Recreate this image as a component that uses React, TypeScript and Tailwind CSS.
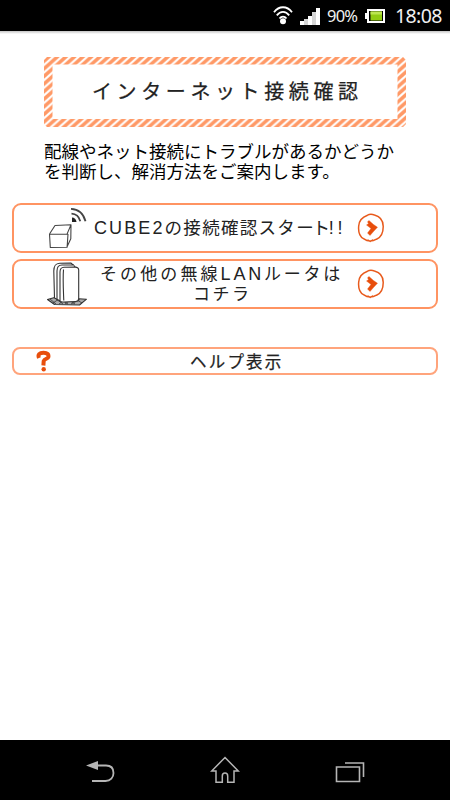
import React from "react";

function StatusBar() {
  return (
    <header className="h-[31px] bg-black text-[#f0f0f0] flex items-center justify-end font-['Noto_Sans','Open_Sans',sans-serif]">
      <svg width="20" height="19" viewBox="0 0 20 19" className="mr-[7px]" fill="none" stroke="#fff" strokeWidth="1.800">
        <path d="M1 6.200C6-.4 14-.4 19 6.200M3.800 9.400c3.600-4.600 8.800-4.600 12.400 0M6.500 12.500c2-2.600 5-2.600 7 0" />
        <circle cx="10" cy="15.300" r="3" fill="#fff" stroke="none" />
      </svg>
      <svg width="20" height="18" viewBox="0 0 20 18" className="mr-[7px]">
        <path d="M0 14h4v4H0zM8 9h4v9H8zM16 1h4v17h-4z" fill="#fff" />
        <path d="M4 12h4v6H4zM12 5h4v13h-4z" fill="#d5d5d5" />
      </svg>
      <span className="text-[16.500px] leading-[30px] tracking-[-0.800px] w-[31px] whitespace-nowrap mr-[7px]">90%</span>
      <svg width="20" height="14" viewBox="0 0 20 14" className="mr-[10px]">
        <path d="M0 4h2v6H0z" fill="#fff" />
        <rect x="3" y="1" width="16" height="12" fill="#000" stroke="#fff" strokeWidth="2" />
        <rect x="5.500" y="2.500" width="11.500" height="9" fill="#91cc12" />
        <path d="M5.500 2.500H17v3H5.500z" fill="#bce650" />
      </svg>
      <span className="text-[19.500px] leading-[31px] tracking-[-0.600px] w-[48px] whitespace-nowrap mr-[7px]">18:08</span>
    </header>
  );
}

function Banner() {
  return (
    <h1 className="relative ml-[44px] mt-[23px] w-[362px] h-[70px] flex items-center">
      <svg className="absolute inset-0" width="362" height="70" viewBox="0 0 362 70">
        <defs>
          <pattern id="stripe" width="8.5" height="7.6" patternUnits="userSpaceOnUse" patternTransform="translate(2 0)">
            <path d="M-8.500 7.600L0 0h5.300L-3.200 7.600zM0 7.600L8.500 0h5.300L5.300 7.600z" fill="#ff9966" />
          </pattern>
        </defs>
        <path fill="url(#stripe)" fillRule="evenodd" d="M3 0h356l3 3v64l-3 3H3l-3-3V3zM8.500 7.500V62h345V7.500z" />
      </svg>
      <span className="ml-[48px] text-[20px] tracking-[4.600px] whitespace-nowrap font-normal text-[#222] [-webkit-text-stroke:0.250px_#222]">インターネット接続確認</span>
    </h1>
  );
}

function CubeIcon() {
  return (
    <svg width="42" height="44" viewBox="0 0 42 44" fill="none" stroke="#444" strokeWidth="1.100" strokeLinejoin="round">
      <path d="M2.500 28l18.500.3-.9 13-16.800.2zM2.500 28l5.500-8.500 16-.7-4 9.300M24 18.800l-.2 14-4 8.500" />
      <path d="M25 16v-4.500c2.500 0 4 1.700 4.500 4.500z" fill="#222" stroke="none" />
      <path d="M24.500 7.700c4.700.2 7.500 2.800 8.800 7.500M24 2.800c8 .3 12.500 5 14.500 12.400" strokeWidth="1.800" />
    </svg>
  );
}

function RouterIcon() {
  return (
    <svg width="42" height="44" viewBox="0 0 42 44" fill="none" stroke="#333" strokeWidth="1.100" strokeLinejoin="round">
      <path d="M.5 37.500l8-2.300 31 2-7 5.800-25-.5z" fill="#aaa" />
      <path d="M3 37l6 5m0-5l7 5m-3-5l8 5m-1-5l8 5m2-4l5 3M6 41l6-4m0 5l7-5m-1 5l7-5m-1 5l9-4.500" strokeWidth=".8" />
      <path d="M7.500 36L6.800 9c0-6 2-7.500 6-7.800l11-.2 4 3.500v34l-15 .3z" fill="#fff" />
      <path d="M10 37V9c0-4 1.500-6 5-6h12M13 38.500V10c0-3 1-4.600 4-4.700l11-.2c2.500 0 3.700 1 3.700 3V36.500c0 2-1 3-3 3L17 40c-2 0-4-.3-4-1.500z" fill="#fff" />
      <path d="M16.500 7.500c-.8 10-.2 19 .3 31" />
    </svg>
  );
}

function ArrowIcon() {
  return (
    <svg width="28" height="31" viewBox="0 0 28 31" fill="none" stroke="#e85a1c">
      <path d="M10.500 2.200C5.500 4 2 8 1.700 13c-.6 6.500 1 10.500 4.800 12.600 3.500 2.500 8.700 3 13 .6 4.700-2 6.800-7 6.700-13C26.200 7.500 23 3.500 17.500 2c-3-1-5.500-.6-7 .2zM10.500 27l2.700 1.500L16 27" strokeWidth="1.500" />
      <path d="M10.500 8.800l1.500-1.300 4.500 4 4 2.700-4 4.300-3.500 4-2.500-2.500 3.500-4.500-4.500-3.500 2-1.500z" fill="#e84e0c" strokeWidth=".4" />
    </svg>
  );
}

export default function App() {
  return (
    <div className="w-[450px] h-[800px] flex flex-col bg-white overflow-hidden text-black font-['Liberation_Sans','Noto_Sans_CJK_JP',sans-serif]">
      <StatusBar />
      <main className="grow flex flex-col">
        <div className="h-[3px] bg-linear-to-b from-[#c4c4c4] to-white" />
        <Banner />
        <p className="ml-[44px] mt-[14px] text-[17.5px] leading-[20px] whitespace-nowrap font-['Noto_Sans_CJK_JP',sans-serif]">
          <span className="block">配線やネット接続にトラブルがあるかどうか</span>
          <span className="block">を判断し、解消方法をご案内します。</span>
        </p>
        <div className="mt-[22px] ml-[12px] mr-[12px] flex flex-col gap-[6px] text-[#222]">
          <button className="h-[50px] rounded-[9px] border-2 border-[#ff9462] flex items-center whitespace-nowrap text-left">
            <span className="ml-[33px] w-[42px]"><CubeIcon /></span>
            <span className="ml-[5px] w-[251px] text-[17.5px] leading-[22px]">
              <span className="text-[18px] tracking-[2.1px]">CUBE2</span><span className="tracking-[1.300px]">の接続確認スタ</span><span className="tracking-[-1.200px]">ート</span><span className="text-[18px] tracking-[3.800px]">!!</span>
            </span>
            <span className="ml-[12px]"><ArrowIcon /></span>
          </button>
          <button className="h-[50px] rounded-[9px] border-2 border-[#ff9462] flex items-center whitespace-nowrap text-left">
            <span className="ml-[33px] w-[42px]"><RouterIcon /></span>
            <span className="ml-[11px] w-[245px] text-[17px] leading-[20px] pt-px">
              <span className="tracking-[3.1px]">その他の無線</span><span className="text-[18px] tracking-[2.800px]">LAN</span><span className="tracking-[2.700px]">ルータは</span>
              <span className="block ml-[93px] tracking-[2.500px]">コチラ</span>
            </span>
            <span className="ml-[12px]"><ArrowIcon /></span>
          </button>
        </div>
        <button className="mt-[38px] ml-[12px] mr-[12px] h-[28px] rounded-[8px] border-2 border-[#ffa47c] flex items-center whitespace-nowrap text-[#222]">
          <svg className="ml-[22px]" width="15" height="22" viewBox="0 0 15 22" fill="none" stroke="#e84e0c">
            <path d="M3 8C1.500 4.500 3.500 2.700 7.500 2.700c4 0 5.500 2 4.800 4.500C11.800 9 8.500 8.500 7.700 11l-.3 4.500" strokeWidth="4" />
            <circle cx="7.700" cy="19.300" r="2.200" fill="#e84e0c" stroke="none" />
          </svg>
          <span className="ml-[139px] mt-px text-[16.500px] leading-[22px] tracking-[2.200px] [-webkit-text-stroke:0.250px_#222]">ヘルプ表示</span>
        </button>
      </main>
      <nav className="h-[60px] bg-black shrink-0 flex items-center text-[#b5b5b5]">
        <svg className="ml-[85px] mt-[2px]" width="30" height="26" viewBox="0 0 30 26" fill="none" stroke="currentColor" strokeWidth="1.800">
          <path d="M11 7.500h10c5 0 7.500 3 7.500 7.500s-3 8-8 8H7" />
          <path d="M1 7.500l12-4.500v9z" fill="currentColor" stroke="none" />
        </svg>
        <svg className="ml-[95px]" width="30" height="28" viewBox="0 0 30 28" fill="none" stroke="currentColor" strokeWidth="1.500">
          <path d="M15 1.500L28.300 15H24v11.300h-6.300V20c0-4-5.400-4-5.400 0v6.300H6V15H1.700z" />
        </svg>
        <svg className="ml-[95px] mt-[4px]" width="30" height="22" viewBox="0 0 30 22" fill="none" stroke="currentColor" strokeWidth="1.600">
          <path d="M1.500 6h23v14.500h-23zM10 2h18.500v14" />
        </svg>
      </nav>
    </div>
  );
}
